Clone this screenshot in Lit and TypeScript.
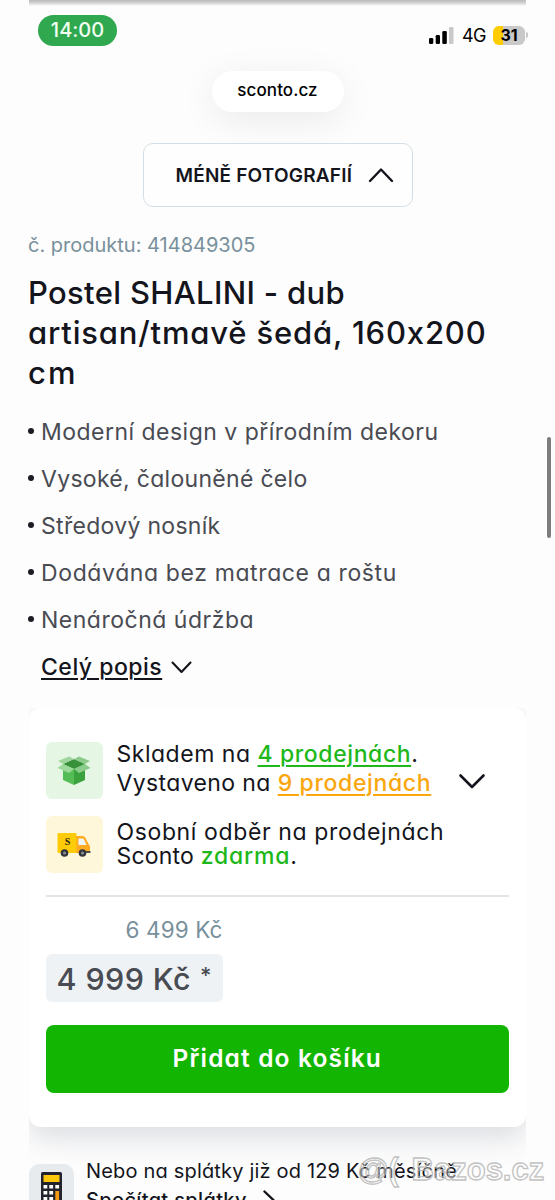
import { LitElement, html, css } from "lit";
import { customElement } from "lit/decorators.js";

const FEATURES = [
  { text: "Moderní design v přírodním dekoru", ls: 0.48 },
  { text: "Vysoké, čalouněné čelo", ls: 0.3 },
  { text: "Středový nosník", ls: 0.3 },
  { text: "Dodávána bez matrace a roštu", ls: 0.62 },
  { text: "Nenáročná údržba", ls: 0.51 },
];

const spaced = (text: string, ls: number, cls = "") =>
  html`<span class=${cls} style="letter-spacing:${ls}px">${text}</span>`;

@customElement("app-root")
export class AppRoot extends LitElement {
  static styles = css`
    :host {
      display: block;
      position: relative;
      box-sizing: border-box;
      width: 555px;
      height: 1200px;
      overflow: hidden;
      background: #fdfdfd;
      color: #14151c;
      font-family: Inter, "Open Sans", sans-serif;
      font-feature-settings: "cv11", "calt" 0;
      font-weight: 400;
    }
    svg { display: block; flex: none; }
    span { white-space: pre; }
    .edge { height: 6px; margin: 0 29px; background: linear-gradient(#b9b9b9, #d0d0d0 45%, #fdfdfd); }
    .status { display: flex; justify-content: space-between; height: 32px; margin: 9px 27px 0 38px; }
    .clock {
      width: 79px; height: 31px; border-radius: 16px; background: #2fa84f; color: #f1fff1;
      font-size: 20px; line-height: 31px; text-align: center; font-weight: 450;
    }
    .signals { display: flex; align-items: center; height: 24px; padding-top: 8px; color: #000; }
    .net { font-size: 18px; margin-left: 8px; width: 24px; }
    .battery {
      width: 32px; height: 19px; margin-left: 7px; border-radius: 6px; font-size: 16px; font-weight: 650;
      line-height: 19px; text-align: center; background: linear-gradient(90deg, #ffcc00 31%, #c9c9c9 31%);
    }
    .nub { width: 2px; height: 6px; margin-left: 1px; border-radius: 0 2px 2px 0; background: #c9c9c9; }
    .url {
      width: 132px; height: 41px; margin: 24px auto 0; border-radius: 21px; background: #fff; color: #000;
      font-size: 17px; font-weight: 500; line-height: 38px; text-align: center;
      box-shadow: 0 8px 36px rgba(0, 0, 0, 0.08);
    }
    .more {
      box-sizing: border-box; display: flex; align-items: center; width: 270px; height: 64px;
      margin: 31px auto 0; padding-left: 32px; border: 1.5px solid #d5dee4; border-radius: 10px;
      background: #fefefe; font-size: 19px; font-weight: 600; gap: 16px; position: relative;
    }
    .sku { margin: 23px 0 0 28px; font-size: 20px; line-height: 31px; color: #78909c; }
    h1 { margin: 12px 0 0 28px; font-size: 31px; line-height: 40px; font-weight: 480; }
    h1 span { display: block; }
    ul { list-style: none; margin: 15px 0 0 28px; padding: 0; }
    li { display: flex; align-items: center; gap: 7px; height: 47px; font-size: 23px; color: #494b53; }
    li::before { content: ""; width: 6px; height: 6px; border-radius: 50%; background: #1b1c24; margin-top: -1px; }
    .full { display: flex; align-items: center; gap: 9px; height: 47px; margin-left: 41px; font-size: 23px; font-weight: 450; }
    .u { text-decoration: underline; text-decoration-thickness: 1.6px; text-underline-offset: 3px; }
    .card {
      box-sizing: border-box; height: 419px; margin: 18px 29px 0; padding: 34px 17px 0 16.5px; background: #fff;
      border-radius: 12px; box-shadow: 0 10px 30px rgba(40, 55, 75, 0.17); clip-path: inset(0 0 -44px 0);
    }
    .row { display: flex; align-items: center; gap: 14px; height: 57px; font-size: 23px; }
    .row + .row { margin-top: 17px; }
    .tile { width: 57px; height: 57px; border-radius: 6px; display: grid; place-items: center; flex: none; }
    .mint { background: #e5f6e4; }
    .cream { background: #fff7d9; }
    .lines { display: flex; flex-direction: column; line-height: 28.5px; margin-top: -4px; }
    .tight { line-height: 24.5px; margin-top: -1px; }
    .lines div { white-space: pre; height: 1lh; }
    .green { color: #1fb81b; font-weight: 450; }
    .amber { color: #faa60e; font-weight: 450; }
    .open { margin: 21px 0 0 13px; }
    .rule { height: 2px; margin-top: 22px; background: #e1e5e7; }
    .prices { width: 177px; margin-top: 18px; }
    .old { font-size: 22.5px; line-height: 30px; color: #78909c; text-align: right; }
    .now {
      display: flex; align-items: center; gap: 9px; height: 48px; margin-top: 9px; padding-left: 11px; box-sizing: border-box;
      border-radius: 6px; background: #eff2f4; color: #494b53; font-size: 30.5px; font-weight: 470;
    }
    .star { font-size: 22px; margin-top: -6px; }
    .buy {
      height: 68px; margin-top: 23px; border-radius: 8px; background: #12b602; color: #fff;
      font-size: 24.5px; font-weight: 580; line-height: 67px; text-align: center;
    }
    .credit { display: flex; margin: 30px 0 0 29px; gap: 12px; font-size: 20px; line-height: 28px; }
    .calc { width: 45px; height: 60px; margin-top: 7px; border-radius: 10px; background: #e8ebee; display: flex; justify-content: center; padding-top: 8px; box-sizing: border-box; }
    .sub { display: flex; align-items: center; gap: 16px; font-weight: 550; padding-top: 1px; }
    .scroll { position: absolute; left: 547px; top: 437px; width: 4px; height: 101px; border-radius: 2px; background: #7d7d7d; }
    .mark {
      position: absolute; left: 358px; top: 1152px; display: flex; gap: 13px; opacity: 0.8;
      font: 700 31px/36px "Liberation Sans", sans-serif; color: rgba(255, 255, 255, 0.45);
      -webkit-text-stroke: 1.3px #b4b4b4;
    }
  `;

  render() {
    return html`
      <div class="edge"></div>
      <div class="status">
        <div class="clock">14:00</div>
        <div class="signals">
          <svg width="25" height="17" viewBox="0 0 25 17">
            <rect x="0" y="11" width="4.3" height="6" rx="1.3" />
            <rect x="6.7" y="8" width="4.3" height="9" rx="1.3" />
            <rect x="13.3" y="4" width="4.5" height="13" rx="1.3" />
            <rect x="20" y="0" width="4.5" height="17" rx="1.3" fill="#c9c9c9" />
          </svg>
          <div class="net">${spaced("4G", -0.6)}</div>
          <div class="battery">31</div>
          <div class="nub"></div>
        </div>
      </div>
      <div class="url">${spaced("sconto.cz", 0.1)}</div>
      <div class="more">
        ${spaced("MÉNĚ FOTOGRAFIÍ", 0.2)}
        <svg width="26" height="16" viewBox="0 0 26 16" fill="none" stroke="#14151c" stroke-width="2.4" stroke-linecap="round" stroke-linejoin="round"><path d="M2 14 13 2.5 24 14" /></svg>
      </div>
      <div class="sku">${spaced("č. produktu: 414849305", 0)}</div>
      <h1>
        ${spaced("Postel SHALINI - dub", 0.33)}${spaced("artisan/tmavě šedá, 160x200", 0.82)}${spaced("cm", 2.2)}
      </h1>
      <ul>${FEATURES.map((f) => html`<li>${spaced(f.text, f.ls)}</li>`)}</ul>
      <div class="full">
        ${spaced("Celý popis", 0.5, "u")}
        <svg width="21" height="14" viewBox="0 0 21 14" fill="none" stroke="#14151c" stroke-width="2.1" stroke-linecap="round" stroke-linejoin="round"><path d="M1.5 2.5 10.5 12 19.5 2.5" /></svg>
      </div>

      <div class="card">
        <div class="row">
          <div class="tile mint">
            <svg width="34" height="30" viewBox="0 0 34 30">
              <path d="M6 8 17 3 28 8 17 13z" fill="#37913a" />
              <path d="M6 8 17 13V29L6 24z" fill="#55bd55" />
              <path d="M28 8 17 13V29L28 24z" fill="#3aa33d" />
              <path d="M6 8 17 3 12 .5 1 5z" fill="#9fd69d" />
              <path d="M28 8 17 3 22 .5 33 5z" fill="#8ccb8b" />
              <path d="M6 8 17 13 12 17 .5 12z" fill="#9cda9b" />
              <path d="M28 8 17 13 22 17 33.5 12z" fill="#8bcd8a" />
            </svg>
          </div>
          <div class="lines">
            <div>${spaced("Skladem na ", 0.52)}${spaced("4 prodejnách", 0.6, "green u")}.</div>
            <div>${spaced("Vystaveno na ", 0.38)}${spaced("9 prodejnách", 0.64, "amber u")}</div>
          </div>
          <svg class="open" width="28" height="17" viewBox="0 0 28 17" fill="none" stroke="#14151c" stroke-width="2.6" stroke-linecap="round" stroke-linejoin="round"><path d="M2.5 2.5 14 14 25.5 2.5" /></svg>
        </div>
        <div class="row">
          <div class="tile cream">
            <svg width="34" height="24" viewBox="0 0 34 24">
              <path d="M19 3h6.5q2 0 3 2l3 6 1.5 2v7H19z" fill="#ffab1f" />
              <path d="M21.500 5.500h4q1 0 1.600 1.200L29.500 12H21.500z" fill="#eef6fb" />
              <rect x="0.500" y="0" width="19" height="20" rx="1" fill="#fdcb08" />
              <path d="M29 18h4.500v2H29z" fill="#55504b" />
              <circle cx="7.500" cy="20" r="3.800" fill="#33353d" /><circle cx="7.500" cy="20" r="1.500" fill="#8d9097" />
              <circle cx="25.500" cy="20" r="3.800" fill="#33353d" /><circle cx="25.500" cy="20" r="1.500" fill="#8d9097" />
              <text x="10.500" y="12" text-anchor="middle" font-family="Liberation Serif" font-weight="700" font-size="10" fill="#2b2410">S</text>
            </svg>
          </div>
          <div class="lines tight">
            <div>${spaced("Osobní odběr na prodejnách", 0.62)}</div>
            <div>${spaced("Sconto ", 0.2)}${spaced("zdarma", 0.8, "green")}.</div>
          </div>
        </div>
        <div class="rule"></div>
        <div class="prices">
          <div class="old">${spaced("6 499 Kč", 0.1)}</div>
          <div class="now">${spaced("4 999 Kč", 0.4)}<span class="star">*</span></div>
        </div>
        <div class="buy">${spaced("Přidat do košíku", 1.15)}</div>
      </div>

      <div class="credit">
        <div class="calc">
          <svg width="21" height="34" viewBox="0 0 21 34">
            <rect width="21" height="36" rx="1.500" fill="#22232c" />
            <rect x="2.500" y="3" width="16" height="7" fill="#fdc70c" />
            <g fill="#fff">
              <rect x="2.500" y="13" width="3.800" height="3.500" /><rect x="8.300" y="13" width="3.800" height="3.500" /><rect x="14.300" y="13" width="3.800" height="3.500" />
              <rect x="2.500" y="19" width="3.800" height="3.500" /><rect x="8.300" y="19" width="3.800" height="3.500" />
              <rect x="2.500" y="25" width="3.800" height="3.500" /><rect x="8.300" y="25" width="3.800" height="3.500" />
            </g>
            <rect x="14.300" y="19" width="3.800" height="9.500" fill="#f39a12" />
          </svg>
        </div>
        <div>
          <div>${spaced("Nebo na splátky již od 129 Kč měsíčně", 0.18)}</div>
          <div class="sub">
            ${spaced("Spočítat splátky", 0.35)}
            <svg width="12" height="20" viewBox="0 0 12 20" fill="none" stroke="#14151c" stroke-width="2.400" stroke-linecap="round" stroke-linejoin="round"><path d="M1.500 1.500 10.500 10 1.500 18.500" /></svg>
          </div>
        </div>
      </div>

      <div class="scroll"></div>
      <div class="mark"><span>@(</span><span>Bazos.cz</span></div>
    `;
  }
}
